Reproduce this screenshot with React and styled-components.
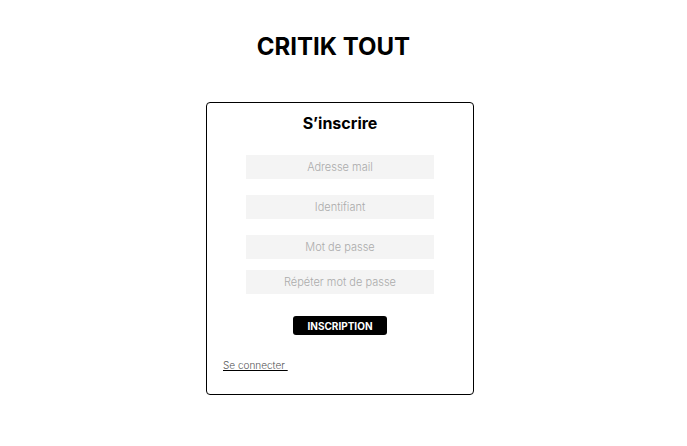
import React from "react";
import styled, { createGlobalStyle } from "styled-components";

const GlobalStyle = createGlobalStyle`
  * {
    box-sizing: border-box;
  }
  body {
    margin: 0;
    background: #ffffff;
    font-family: Inter, "Noto Sans", sans-serif;
    color: #000000;
  }
`;

const fields = [
  { placeholder: "Adresse mail", type: "email", gap: 22 },
  { placeholder: "Identifiant", type: "text", gap: 16 },
  { placeholder: "Mot de passe", type: "password", gap: 16 },
  { placeholder: "Répéter mot de passe", type: "password", gap: 11 },
];

const App = () => {
  return (
    <>
      <GlobalStyle />
      <Page>
        <Brand>CRITIK TOUT</Brand>
        <Card>
          <Heading>S’inscrire</Heading>
          <Form onSubmit={(e) => e.preventDefault()}>
            {fields.map((f) => (
              <Field
                key={f.placeholder}
                type={f.type}
                placeholder={f.placeholder}
                $gap={f.gap}
              />
            ))}
            <Submit type="submit">INSCRIPTION</Submit>
          </Form>
          <LoginLink href="#">Se connecter </LoginLink>
        </Card>
      </Page>
    </>
  );
};

const Page = styled.main`
  width: 687px;
  padding-top: 32px;
  display: flex;
  flex-direction: column;
`;

const Brand = styled.h1`
  width: 667px;
  margin: 0;
  font-size: 24px;
  line-height: 29px;
  font-weight: 700;
  text-align: center;
`;

const Card = styled.section`
  width: 268px;
  height: 293px;
  margin: 41px 0 0 206px;
  padding: 10px 16px 0;
  border: 1px solid #000000;
  border-radius: 4px;
  display: flex;
  flex-direction: column;
`;

const Heading = styled.h2`
  margin: 0;
  font-size: 16px;
  line-height: 20px;
  font-weight: 700;
  text-align: center;
`;

const Form = styled.form`
  display: flex;
  flex-direction: column;
  align-items: center;
`;

const Field = styled.input`
  width: 188px;
  height: 24px;
  margin-top: ${(p) => p.$gap}px;
  border: none;
  outline: none;
  background: #f4f4f4;
  font-family: Inter, "Noto Sans", sans-serif;
  font-size: 11px;
  font-weight: 300;
  text-align: center;
  color: #333333;
  &::placeholder {
    color: #ababab;
  }
`;

const Submit = styled.button`
  width: 94px;
  height: 19px;
  margin-top: 22px;
  padding: 0;
  border: none;
  border-radius: 3px;
  background: #000000;
  color: #ffffff;
  font-family: Inter, "Noto Sans", sans-serif;
  font-size: 10px;
  font-weight: 700;
  cursor: pointer;
`;

const LoginLink = styled.a`
  align-self: flex-start;
  margin-top: 24px;
  font-size: 10px;
  line-height: 12px;
  font-weight: 300;
  color: #555555;
  white-space: pre;
  text-decoration: underline;
  text-decoration-color: #000000;
`;

export default App;
